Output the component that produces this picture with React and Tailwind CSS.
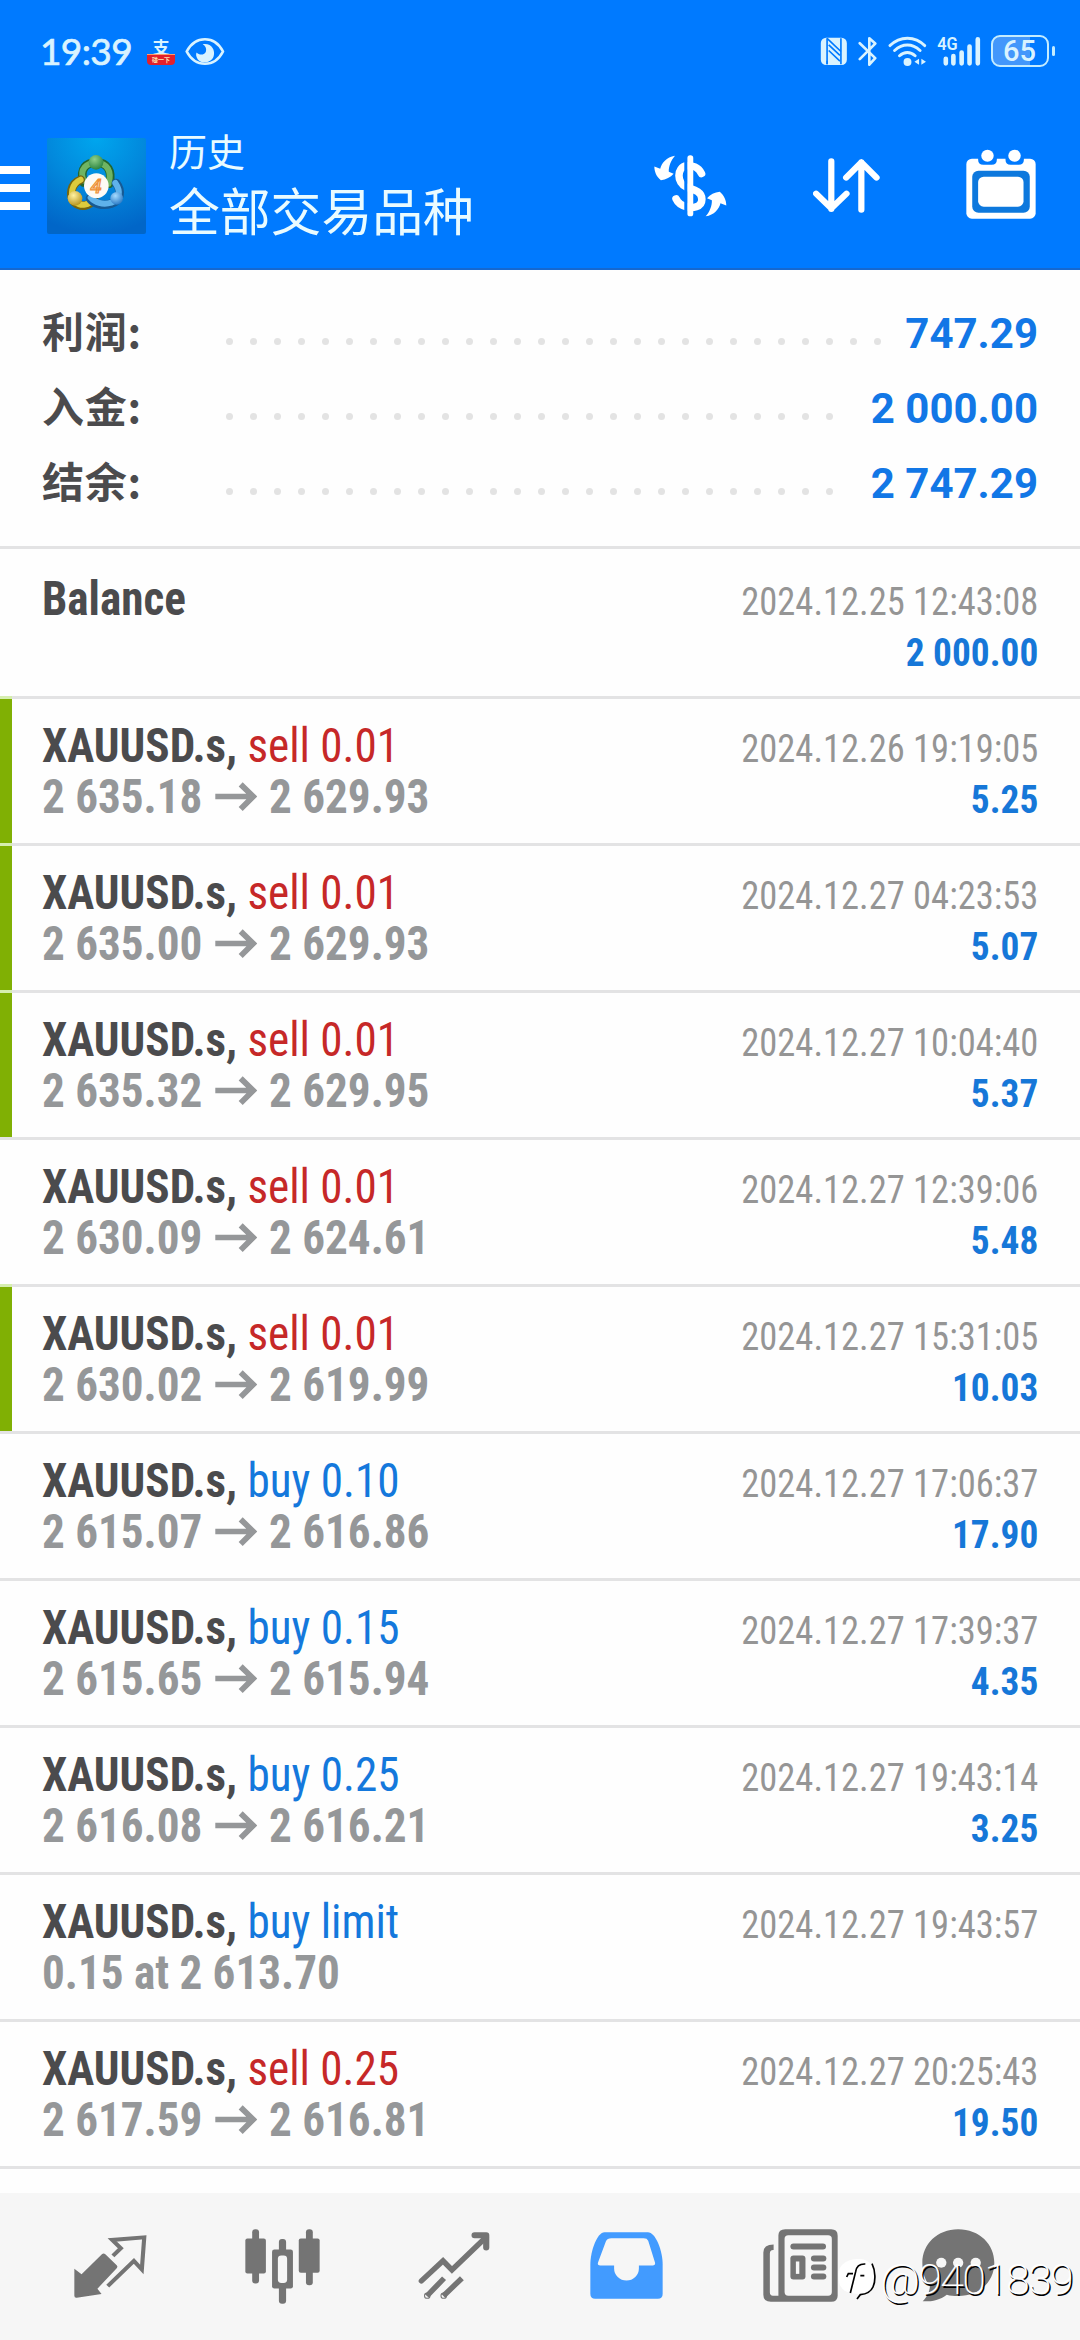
import React from "react";

const SUMMARY = [
  { label: "利润:", value: "747.29", dots: 28 },
  { label: "入金:", value: "2 000.00", dots: 26 },
  { label: "结余:", value: "2 747.29", dots: 26 },
];

const DEALS = [
  { side: "sell", action: "sell 0.01", from: "2 635.18", to: "2 629.93", time: "2024.12.26 19:19:05", profit: "5.25", tp: true },
  { side: "sell", action: "sell 0.01", from: "2 635.00", to: "2 629.93", time: "2024.12.27 04:23:53", profit: "5.07", tp: true },
  { side: "sell", action: "sell 0.01", from: "2 635.32", to: "2 629.95", time: "2024.12.27 10:04:40", profit: "5.37", tp: true },
  { side: "sell", action: "sell 0.01", from: "2 630.09", to: "2 624.61", time: "2024.12.27 12:39:06", profit: "5.48" },
  { side: "sell", action: "sell 0.01", from: "2 630.02", to: "2 619.99", time: "2024.12.27 15:31:05", profit: "10.03", tp: true },
  { side: "buy", action: "buy 0.10", from: "2 615.07", to: "2 616.86", time: "2024.12.27 17:06:37", profit: "17.90" },
  { side: "buy", action: "buy 0.15", from: "2 615.65", to: "2 615.94", time: "2024.12.27 17:39:37", profit: "4.35" },
  { side: "buy", action: "buy 0.25", from: "2 616.08", to: "2 616.21", time: "2024.12.27 19:43:14", profit: "3.25" },
  { side: "buy", action: "buy limit", note: "0.15 at 2 613.70", time: "2024.12.27 19:43:57" },
  { side: "sell", action: "sell 0.25", from: "2 617.59", to: "2 616.81", time: "2024.12.27 20:25:43", profit: "19.50" },
];

function StatusBar() {
  return (
    <div className="flex items-center h-[103px] pl-[40px] pr-[25px] text-[#d9f3ff]">
      <span className="w-[107px] -mt-[3px] text-[37px] leading-none tracking-[-0.6px] font-['Lato',sans-serif] [-webkit-text-stroke:0.7px_#d9f3ff]">19:39</span>

      {/* Payment app notification */}
      <div className="flex flex-col items-center w-[28px]">
        <span className="text-[17px] leading-[15px] font-bold font-['Noto_Sans_CJK_SC',sans-serif]">支</span>
        <span className="w-[28px] h-[11px] rounded-b-[4px] bg-[#e3202c] border-t border-[#ff9a6a] text-[6px] leading-[9px] text-center text-[#ffe0b0] font-bold font-['Noto_Sans_CJK_SC',sans-serif]">
          碰一下
        </span>
      </div>

      <svg className="ml-[10px] w-[40px] h-[29px]" viewBox="464 22 120 86" fill="none">
        <path d="M469 65C495 16 553 16 578 65C553 114 495 114 469 65Z" stroke="currentColor" strokeWidth="8" strokeLinejoin="round" />
        <path d="M517 43C542 38 556 60 550 79C543 99 515 104 502 88C497 80 496 73 499 68C508 78 524 75 527 64C529 55 525 47 517 43Z" fill="currentColor" />
      </svg>

      <div className="ml-auto flex items-center gap-[10px] -mt-[1px]">
        <svg className="w-[28px] h-[29px]" viewBox="24 36 84 88" fill="none">
          <rect x="26" y="38" width="79" height="83" rx="16" fill="currentColor" />
          <path d="M45 40V119M87 40V119" stroke="#007aff" strokeWidth="5" />
          <path d="M45 40L87 80M50 60L84 92M50 77L84 109M45 108V119" stroke="#007aff" strokeWidth="5" />
        </svg>
        <svg className="w-[20px] h-[31px]" viewBox="138 32 60 94" fill="none">
          <path d="M143 54L190 99L172 119V39L190 55L143 102" stroke="currentColor" strokeWidth="8" strokeLinejoin="round" strokeLinecap="round" />
        </svg>
        <svg className="w-[39px] h-[31px]" viewBox="228 30 118 94" fill="none">
          <path d="M234 59C264 29 310 29 339 59M248 74C272 52 301 52 325 74M263 90C277 77 296 77 310 90" stroke="currentColor" strokeWidth="9" strokeLinecap="round" />
          <circle cx="287" cy="109" r="12" fill="currentColor" />
          <path d="M322 99V117L308 108ZM329 99V117L343 108Z" fill="currentColor" />
        </svg>
        <svg className="w-[44px] h-[31px] overflow-visible" viewBox="378 30 132 94" fill="none">
          <text x="378" y="74" fontSize="54" textLength="62" lengthAdjust="spacingAndGlyphs" fontWeight="600" fill="currentColor" fontFamily="Roboto, sans-serif">4G</text>
          <path d="M404 99V113M427 91V113M452 80V113M476 62V113M501 40V113" stroke="currentColor" strokeWidth="14" strokeLinecap="round" />
        </svg>
        <div className="flex items-center gap-[3px]">
          <div className="flex w-[58px] h-[32px] items-center justify-center rounded-[9px] border-[2.5px] border-[#c4ecff] bg-linear-to-r from-[#4397fb] from-68% to-[#007aff] to-68% text-[29px] leading-none font-medium font-['Roboto',sans-serif]">
            65
          </div>
          <div className="w-[3.5px] h-[10px] rounded-full bg-[#c4ecff]" />
        </div>
      </div>
    </div>
  );
}

function AppLogo() {
  return (
    <svg className="w-[99px] h-[96px] ml-[17px]" viewBox="21 23 297 288">
      <defs>
        <radialGradient id="logoBg" cx="0.5" cy="0" r="1">
          <stop offset="0" stopColor="#00a6ee" />
          <stop offset="0.5" stopColor="#0288dc" />
          <stop offset="1" stopColor="#0166c8" />
        </radialGradient>
        <radialGradient id="green" cx="0.4" cy="0.3" r="0.8">
          <stop offset="0" stopColor="#8fd08a" />
          <stop offset="1" stopColor="#1f7a35" />
        </radialGradient>
        <radialGradient id="gold" cx="0.4" cy="0.3" r="0.8">
          <stop offset="0" stopColor="#fff2a0" />
          <stop offset="1" stopColor="#b08a10" />
        </radialGradient>
        <radialGradient id="sky" cx="0.4" cy="0.3" r="0.8">
          <stop offset="0" stopColor="#a6dcff" />
          <stop offset="1" stopColor="#1c6fc0" />
        </radialGradient>
      </defs>
      <rect x="21" y="23" width="297" height="288" rx="6" fill="url(#logoBg)" />
      <g fill="none" strokeLinecap="round">
        <path d="M130 156C118 115 140 96 168 96C202 96 218 122 208 160" stroke="#23662e" strokeWidth="26" />
        <path d="M130 150C118 115 140 98 168 98C202 98 216 122 206 160" stroke="#6fb462" strokeWidth="18" />
        <path d="M122 148C92 160 86 195 104 216C124 234 150 226 162 206" stroke="#75650f" strokeWidth="26" />
        <path d="M122 148C94 160 88 195 106 214C124 230 148 224 160 206" stroke="#dccb3c" strokeWidth="18" />
        <path d="M228 158C248 184 240 212 214 220C186 228 160 220 150 204" stroke="#175a94" strokeWidth="26" />
        <path d="M226 158C244 184 238 208 214 217C188 225 164 216 152 202" stroke="#5fb2ea" strokeWidth="18" />
      </g>
      <circle cx="168" cy="96" r="22" fill="url(#green)" />
      <circle cx="105" cy="204" r="22" fill="url(#gold)" />
      <circle cx="230" cy="204" r="19" fill="url(#sky)" />
      <circle cx="169" cy="166" r="37" fill="#fdfaf5" />
      <text x="168" y="188" textAnchor="middle" fontSize="60" fontStyle="italic" fill="#f7d6a8" stroke="#ee8f35" strokeWidth="3.5" fontFamily="Roboto, sans-serif" fontWeight="500">4</text>
    </svg>
  );
}

function Header() {
  return (
    <header className="h-[270px] shrink-0 bg-[#007aff] border-b-2 border-[#1668cf]">
      <StatusBar />
      <div className="flex items-center h-[165px] pr-[44px] text-white">
        <div className="flex flex-col gap-[10px] w-[30px] mt-[5px]">
          <div className="h-[8px] bg-white" />
          <div className="h-[8px] bg-white" />
          <div className="h-[8px] bg-white" />
        </div>
        <AppLogo />
        <div className="ml-[23px] -mt-[6px] font-['Noto_Sans_CJK_SC',sans-serif] text-[#e9fbff]">
          <div className="text-[38px] leading-[52px]">历史</div>
          <div className="text-[50.8px] leading-[66px]">全部交易品种</div>
        </div>

        <div className="ml-auto flex items-center gap-[86px]">
          <svg className="w-[73px] h-[62px]" viewBox="330 466 212 184" preserveAspectRatio="none" fill="none">
            <path d="M468 521C458 501 440 496 425 498C395 502 395 550 425 562C440 568 469 572 469 597C469 622 440 624 425 620C410 616 400 610 394 596" stroke="white" strokeWidth="22" strokeLinecap="round" />
            <rect x="418" y="480" width="10" height="160" fill="#007aff" />
            <rect x="427" y="467" width="17" height="181" rx="8" fill="white" />
            <path d="M391 468C366 472 352 490 348 507L331 500C331 515 337 530 350 541C365 539 378 533 387 522L373 516C372 500 380 480 391 468Z" fill="white" />
            <path d="M391 468C366 472 352 490 348 507L331 500C331 515 337 530 350 541C365 539 378 533 387 522L373 516C372 500 380 480 391 468Z" fill="white" transform="rotate(180 435.500 558)" />
          </svg>
          <svg className="w-[67px] h-[55px]" viewBox="792 475 194 165" preserveAspectRatio="none" fill="none" stroke="white" strokeWidth="18" strokeLinecap="round" strokeLinejoin="round">
            <path d="M845 485V628M801 582L845 626L889 582" />
            <path d="M932 630V488M888 534L932 488L976 534" />
          </svg>
          <svg className="w-[70px] h-[70px] -mt-[3px]" viewBox="1236 448 202 210" preserveAspectRatio="none">
            <rect x="1237" y="477" width="200" height="180" rx="16" fill="white" />
            <path d="M1271 470H1325V480Q1325 495 1310 495H1286Q1271 495 1271 480ZM1350 470H1403V480Q1403 495 1388 495H1365Q1350 495 1350 480Z" fill="#007aff" />
            <rect x="1254" y="513" width="166" height="126" rx="18" fill="#0d78dd" />
            <rect x="1271" y="531" width="131" height="90" rx="16" fill="white" />
            <circle cx="1298" cy="468" r="18" fill="white" />
            <circle cx="1376" cy="468" r="18" fill="white" />
          </svg>
        </div>
      </div>
    </header>
  );
}

function Summary() {
  return (
    <section className="h-[276px] shrink-0 pt-[22px] pl-[42px] pr-[42px]">
      {SUMMARY.map((row) => (
        <div key={row.label} className="flex items-baseline h-[75px] leading-[75px] text-[42px] font-bold">
          <span className="w-[184px] tracking-[0.8px] text-[#4b4b4d] font-['Noto_Sans_CJK_SC',sans-serif]">{row.label}</span>
          <div className="flex self-end gap-[17px] mb-[22px]">
            {Array.from({ length: row.dots }, (_, i) => (
              <span key={i} className="size-[7px] rounded-full bg-[#e3e3e3]" />
            ))}
          </div>
          <span className="ml-auto text-[#1277e6] font-['Roboto',sans-serif]">{row.value}</span>
        </div>
      ))}
    </section>
  );
}

function PriceArrow() {
  return (
    <svg className="w-[45px] h-[29px] mx-[13px]" viewBox="623 274 125 86" preserveAspectRatio="none" fill="none" stroke="currentColor" strokeWidth="17">
      <path d="M624 317H738M699 281L736 317L699 354" />
    </svg>
  );
}

function DealInfo({ time, profit }) {
  return (
    <div className="pt-[4px] text-right text-[39px]">
      <div className="origin-right scale-x-[0.936] text-[#959595]">{time}</div>
      <div className="origin-right scale-x-[0.957] font-bold text-[#1677d8]">{profit}</div>
    </div>
  );
}

function DealRow({ deal }) {
  return (
    <div className="flex h-[147px] shrink-0">
      <div
        className={
          deal.tp
            ? "w-3 border-t-3 border-[#d6eeb0] bg-[#80b004]"
            : "w-3 border-t-3 border-[#e3e3e4]"
        }
      />
      <div className="flex flex-1 justify-between border-t-3 border-[#e3e3e4] pt-[21px] pl-[30px] pr-[42px] leading-[51px]">
        <div className="origin-left scale-x-[0.94] text-[48px] font-bold">
          <div className="text-[#4b4b4d]">
            XAUUSD.s,{" "}
            <span className={deal.side === "sell" ? "font-normal text-[#c62828]" : "font-normal text-[#1478dc]"}>
              {deal.action}
            </span>
          </div>
          <div className="flex items-center text-[#959799]">
            {deal.note ? deal.note : (
              <>
                <span>{deal.from}</span>
                <PriceArrow />
                <span>{deal.to}</span>
              </>
            )}
          </div>
        </div>
        <DealInfo time={deal.time} profit={deal.profit} />
      </div>
    </div>
  );
}

function TabBar() {
  return (
    <nav className="grid grid-cols-6 items-center justify-items-center h-[147px] shrink-0 px-[24px] bg-[#f6f6f6] text-[#747474]">
      {/* Quotes */}
      <svg className="w-[73px] h-[63px]" viewBox="214 284 212 190" preserveAspectRatio="none" fill="none">
        <path d="M215 386L236 402L295 342Q300 337 305 342L338 375Q342 379 338 384L282 446L294 462L222 473Q215 474 215 467Z" fill="currentColor" />
        <path d="M327 347L350 324L325 299L418 291L411 388L388 362L312 438" stroke="currentColor" strokeWidth="12" />
      </svg>
      {/* Charts */}
      <svg className="w-[75px] h-[75px]" viewBox="708 266 219 224" preserveAspectRatio="none" fill="currentColor">
        <rect x="729" y="267" width="20" height="162" rx="9" />
        <rect x="709" y="294" width="60" height="105" rx="6" />
        <rect x="807" y="296" width="21" height="193" rx="9" />
        <rect x="787" y="327" width="61" height="117" rx="7" />
        <rect x="804" y="345" width="27" height="82" rx="10" fill="#f6f6f6" />
        <rect x="886" y="267" width="20" height="167" rx="9" />
        <rect x="865" y="294" width="61" height="103" rx="6" />
      </svg>
      {/* Trade */}
      <svg className="w-[72px] h-[67px] -mt-[2px]" viewBox="1212 275 210 200" preserveAspectRatio="none" fill="none" stroke="currentColor" strokeWidth="16">
        <path d="M1222 421L1285 361L1311 388L1411 290" strokeLinecap="round" />
        <path d="M1377 285H1411V321" strokeWidth="18" strokeLinecap="round" strokeLinejoin="round" />
        <path d="M1288 413L1238 466M1340 413L1286 466" />
        <circle cx="1239" cy="465" r="1.500" />
        <circle cx="1287" cy="465" r="1.500" />
      </svg>
      {/* History */}
      <svg className="w-[73px] h-[67px] -mt-[2px]" viewBox="145 275 212 200" preserveAspectRatio="none">
        <path d="M187 276H313C335 276 356 330 356 372V460Q356 474 342 474H160Q146 474 146 460V372C146 330 167 276 187 276Z" fill="#429bff" />
        <path d="M207 294H301Q311 294 314 301L334 367Q335 375 327 375H287V384A36 36 0 0 1 215 384V375H175Q166 375 168 367L191 303Q195 294 207 294Z" fill="#f6f6f6" />
      </svg>
      {/* News */}
      <svg className="ml-[4px] w-[75px] h-[73px] -mt-[2px]" viewBox="645 266 219 218" preserveAspectRatio="none" fill="currentColor">
        <path d="M676 312V329Q665 328 665 340V455Q665 465 674 465H690V331V285Q690 267 710 267H844Q863 267 863 286V465Q863 483 844 483H668Q646 483 646 462V336Q646 312 676 312Z" />
        <rect x="708" y="285" width="138" height="180" rx="11" fill="#f6f6f6" />
        <rect x="725" y="309" width="104" height="18" rx="9" />
        <rect x="725" y="345" width="44" height="72" rx="9" />
        <rect x="741" y="363" width="10" height="37" fill="#f6f6f6" />
        <rect x="785" y="345" width="45" height="18" rx="9" />
        <rect x="785" y="372" width="45" height="18" rx="9" />
        <rect x="785" y="399" width="45" height="18" rx="9" />
      </svg>
      {/* Messages */}
      <svg className="mr-[24px] w-[73px] h-[73px] -mt-[2px]" viewBox="1108 266 212 218" preserveAspectRatio="none">
        <path d="M1213 267C1275 267 1318 312 1318 367C1318 424 1275 466 1213 466C1200 466 1190 465 1180 462C1160 478 1135 483 1110 482C1122 470 1130 454 1131 438C1117 420 1109 395 1109 367C1109 312 1152 267 1213 267Z" fill="currentColor" />
        <g fill="#f6f6f6">
          <circle cx="1164" cy="367" r="15" />
          <circle cx="1213" cy="367" r="15" />
          <circle cx="1264" cy="367" r="15" />
        </g>
      </svg>
    </nav>
  );
}

function Watermark() {
  return (
    <div className="absolute right-[8px] bottom-[36px] flex items-center text-white">
      <svg className="w-[40px] h-[46px] mr-[3px]" viewBox="288 158 120 132" fill="none">
        <path d="M292 214C292 176 325 162 358 164C392 166 402 196 398 226C396 256 374 266 352 270L330 266C304 262 292 244 292 214Z" fill="white" />
        <path d="M393 178C404 200 404 232 396 248C388 266 368 270 358 271L348 284" stroke="black" strokeWidth="5" />
        <path d="M373 179C354 178 346 188 344 202L328 266M317 218L322 208H336M358 214H370" stroke="black" strokeWidth="5" />
      </svg>
      <span className="text-[43px] leading-[50px] font-extralight tracking-[-1.7px] font-['Roboto',sans-serif] [text-shadow:1.5px_1.5px_0_#000]">@9401839</span>
    </div>
  );
}

export default function App() {
  return (
    <div className="relative flex flex-col w-[1080px] h-[2340px] overflow-hidden bg-[#fefefe] font-['Roboto',sans-serif]">
      <Header />
      <Summary />

      <main className="flex flex-col flex-1 min-h-0 font-stretch-condensed">
        <div className="flex justify-between h-[150px] shrink-0 border-t-3 border-[#e3e3e4] pt-[24px] pl-[42px] pr-[42px] leading-[51px]">
          <div className="origin-left scale-x-[0.94] text-[48px] font-bold text-[#4b4b4d]">Balance</div>
          <DealInfo time="2024.12.25 12:43:08" profit="2 000.00" />
        </div>
        {DEALS.map((deal) => (
          <DealRow key={deal.time} deal={deal} />
        ))}
        <div className="border-t-3 border-[#e3e3e4]" />
      </main>

      <TabBar />
      <Watermark />
    </div>
  );
}
